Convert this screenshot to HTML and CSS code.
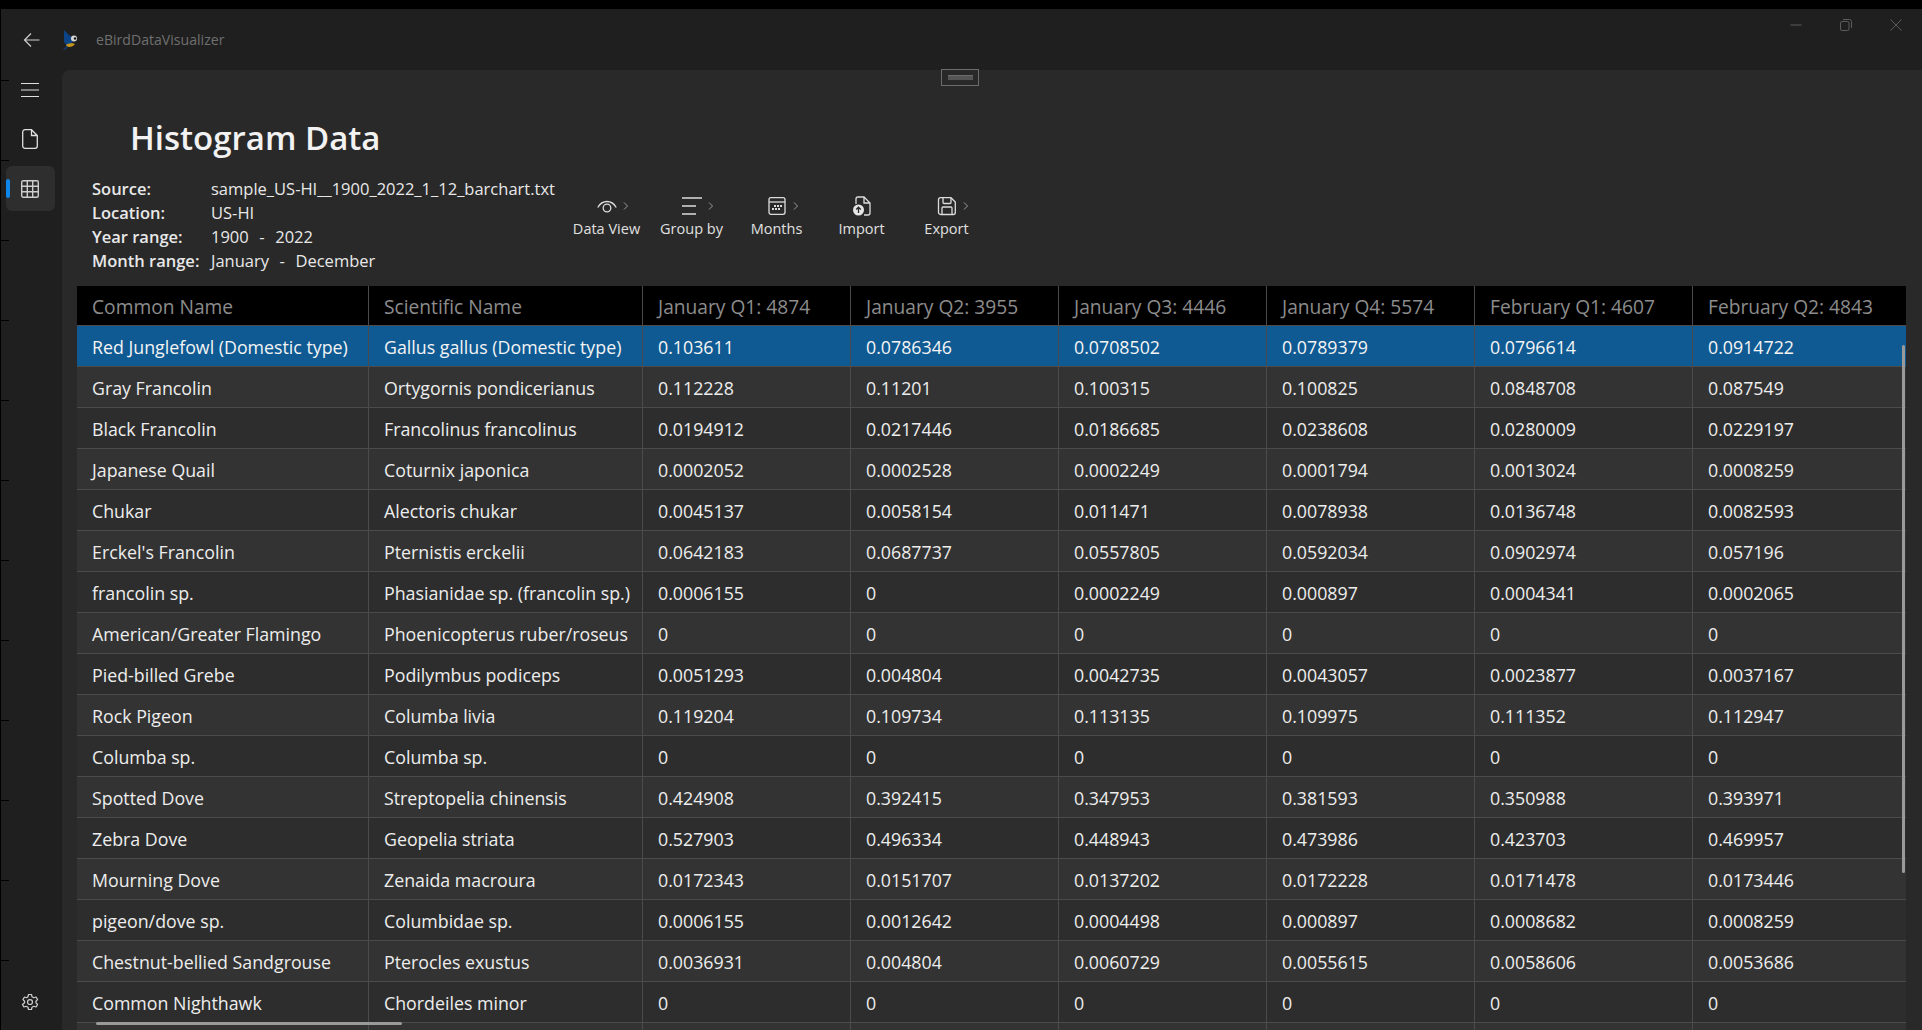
FILE: index.html
```html
<!DOCTYPE html>
<html>
<head>
<meta charset="utf-8">
<title>eBirdDataVisualizer</title>
<link rel="stylesheet" href="styles.css">
</head>
<body>
<div class="topstrip"></div>
<div class="titlebar">
  <svg class="back" width="18" height="16" viewBox="0 0 18 16"><path d="M16.5 8H1.5M8 1.5L1.5 8L8 14.5" fill="none" stroke="#cfcfcf" stroke-width="1.2"/></svg>
  <svg class="logo" width="20" height="20" viewBox="0 0 20 20"><path d="M3 0l5 5 4 3-1 7-5 1-3-4z" fill="#0c4488"/><path d="M5 16c3 2 7 1 9-2l-3-1-5 1z" fill="#c4941c"/><circle cx="13" cy="8.500" r="3" fill="#d8d8d8"/><circle cx="14" cy="8.500" r="1.200" fill="#111"/><path d="M16 8l3 1.500-3 1z" fill="#222"/><path d="M2 19l4-3 1 1-3 3z" fill="#123a70"/></svg>
  <span class="apptitle">eBirdDataVisualizer</span>
  <div class="winbtns">
    <svg width="12" height="12" viewBox="0 0 12 12"><path d="M0.500 6H11.500" stroke="#5c5c5c"/></svg>
    <svg width="12" height="12" viewBox="0 0 12 12"><rect x="0.500" y="2.500" width="8.500" height="9" rx="1.500" fill="none" stroke="#5c5c5c"/><path d="M3 0.500h6.500a2 2 0 0 1 2 2V9" fill="none" stroke="#5c5c5c"/></svg>
    <svg width="12" height="12" viewBox="0 0 12 12"><path d="M0.500 0.500L11.500 11.500M11.500 0.500L0.500 11.500" stroke="#5c5c5c"/></svg>
  </div>
</div>
<div class="shell">
  <nav class="sidebar">
    <div class="nav-item nav-menu"><svg width="18" height="14" viewBox="0 0 18 14"><path d="M0 0.500H18M0 7H18M0 13.500H18" stroke="#e0e0e0" stroke-width="1.200"/></svg></div>
    <div class="nav-item"><svg width="16" height="20" viewBox="0 0 16 20"><path d="M3 0.700H9.500L15.300 6.500V17a2.300 2.300 0 0 1-2.300 2.300H3A2.300 2.300 0 0 1 0.700 17V3A2.300 2.300 0 0 1 3 0.700zM9.500 0.700V6.500H15.300" fill="none" stroke="#e0e0e0" stroke-width="1.300"/></svg></div>
    <div class="nav-item selected"><span class="indicator"></span><svg width="18" height="18" viewBox="0 0 18 18"><rect x="0.700" y="0.700" width="16.600" height="16.600" rx="1.500" fill="none" stroke="#cfcfcf" stroke-width="1.400"/><path d="M6.300 1V17M11.700 1V17M1 6.300H17M1 11.700H17" stroke="#cfcfcf" stroke-width="1.400"/></svg></div>
    <div class="nav-item nav-gear"><svg width="18" height="18" viewBox="0 0 24 24"><circle cx="12" cy="12" r="3.300" fill="none" stroke="#cfcfcf" stroke-width="1.600"/><path d="M10 2h4l.7 3 2.400 1.300 3-.9 2 3.400-2.200 2.200v2l2.200 2.200-2 3.400-3-.9-2.400 1.300-.7 3h-4l-.7-3-2.400-1.300-3 .9-2-3.400L4.800 13v-2L2.600 8.800l2-3.400 3 .9L9.300 5z" fill="none" stroke="#cfcfcf" stroke-width="1.600" stroke-linejoin="round"/></svg></div>
  </nav>
  <main class="content">
    <div class="grip"><span></span></div>
    <h1 class="page-title">Histogram Data</h1>
    <div class="summary">
      <dl class="info">
        <dt>Source:</dt><dd>sample_US-HI__1900_2022_1_12_barchart.txt</dd>
        <dt>Location:</dt><dd>US-HI</dd>
        <dt>Year range:</dt><dd>1900 &nbsp;-&nbsp; 2022</dd>
        <dt>Month range:</dt><dd>January &nbsp;-&nbsp; December</dd>
      </dl>
      <div class="toolbar">
        <div class="tool">
          <div class="tool-icon"><svg width="20" height="20" viewBox="0 0 20 20"><path d="M0.800 11.500C3 7.500 6.300 5.500 10 5.500s7 2 9.200 6" fill="none" stroke="#dcdcdc" stroke-width="1.300"/><circle cx="10" cy="12" r="3.800" fill="none" stroke="#dcdcdc" stroke-width="1.300"/></svg><svg class="chev" width="6" height="8" viewBox="0 0 6 8"><path d="M1 0.500L4.500 4L1 7.500" fill="none" stroke="#9a9a9a"/></svg></div>
          <span>Data View</span>
        </div>
        <div class="tool">
          <div class="tool-icon"><svg width="20" height="20" viewBox="0 0 20 20"><path d="M0 2H20M0 10H14M0 18H14" stroke="#dcdcdc" stroke-width="1.300"/></svg><svg class="chev" width="6" height="8" viewBox="0 0 6 8"><path d="M1 0.500L4.500 4L1 7.500" fill="none" stroke="#9a9a9a"/></svg></div>
          <span>Group by</span>
        </div>
        <div class="tool">
          <div class="tool-icon"><svg width="20" height="20" viewBox="0 0 20 20"><rect x="2" y="1.700" width="16" height="16.600" rx="2" fill="none" stroke="#dcdcdc" stroke-width="1.300"/><path d="M2 6H18" stroke="#dcdcdc" stroke-width="1.300"/><path d="M7 9h2v2H7zM10 9h2v2h-2zM13 9h2v2h-2zM5 12h2v2H5zM8 12h2v2H8zM11 12h2v2h-2z" fill="#dcdcdc"/></svg><svg class="chev" width="6" height="8" viewBox="0 0 6 8"><path d="M1 0.500L4.500 4L1 7.500" fill="none" stroke="#9a9a9a"/></svg></div>
          <span>Months</span>
        </div>
        <div class="tool">
          <div class="tool-icon"><svg width="20" height="20" viewBox="0 0 20 20"><path d="M4 8V3a2 2 0 0 1 2-2h6l6 6v10a2 2 0 0 1-2 2h-4M12 1v6h6" fill="none" stroke="#dcdcdc" stroke-width="1.300"/><circle cx="6.500" cy="14" r="5.500" fill="#e6e6e6"/><path d="M6.500 17V11.500M4.200 13.500l2.300-2.300 2.300 2.300" fill="none" stroke="#292929" stroke-width="1.300"/></svg></div>
          <span>Import</span>
        </div>
        <div class="tool">
          <div class="tool-icon"><svg width="20" height="20" viewBox="0 0 20 20"><path d="M3.500 1.700H14L18.300 6V16.500a2 2 0 0 1-2 2H3.500a2 2 0 0 1-2-2V3.700a2 2 0 0 1 2-2z" fill="none" stroke="#dcdcdc" stroke-width="1.300"/><path d="M6 2v4.500a1 1 0 0 0 1 1h6a1 1 0 0 0 1-1V2M5 18.500V12a1 1 0 0 1 1-1h8a1 1 0 0 1 1 1v6.500" fill="none" stroke="#dcdcdc" stroke-width="1.300"/></svg><svg class="chev" width="6" height="8" viewBox="0 0 6 8"><path d="M1 0.500L4.500 4L1 7.500" fill="none" stroke="#9a9a9a"/></svg></div>
          <span>Export</span>
        </div>
      </div>
    </div>
    <div class="grid-wrap">
      <table class="grid">
        <colgroup><col class="c1"><col class="c2"><col class="c3"><col class="c4"><col class="c5"><col class="c6"><col class="c7"><col class="c8"></colgroup>
        <thead>
          <tr><th>Common Name</th><th>Scientific Name</th><th>January Q1: 4874</th><th>January Q2: 3955</th><th>January Q3: 4446</th><th>January Q4: 5574</th><th>February Q1: 4607</th><th>February Q2: 4843</th></tr>
        </thead>
        <tbody>
          <tr class="active"><td>Red Junglefowl (Domestic type)</td><td>Gallus gallus (Domestic type)</td><td>0.103611</td><td>0.0786346</td><td>0.0708502</td><td>0.0789379</td><td>0.0796614</td><td>0.0914722</td></tr>
          <tr><td>Gray Francolin</td><td>Ortygornis pondicerianus</td><td>0.112228</td><td>0.11201</td><td>0.100315</td><td>0.100825</td><td>0.0848708</td><td>0.087549</td></tr>
          <tr><td>Black Francolin</td><td>Francolinus francolinus</td><td>0.0194912</td><td>0.0217446</td><td>0.0186685</td><td>0.0238608</td><td>0.0280009</td><td>0.0229197</td></tr>
          <tr><td>Japanese Quail</td><td>Coturnix japonica</td><td>0.0002052</td><td>0.0002528</td><td>0.0002249</td><td>0.0001794</td><td>0.0013024</td><td>0.0008259</td></tr>
          <tr><td>Chukar</td><td>Alectoris chukar</td><td>0.0045137</td><td>0.0058154</td><td>0.011471</td><td>0.0078938</td><td>0.0136748</td><td>0.0082593</td></tr>
          <tr><td>Erckel's Francolin</td><td>Pternistis erckelii</td><td>0.0642183</td><td>0.0687737</td><td>0.0557805</td><td>0.0592034</td><td>0.0902974</td><td>0.057196</td></tr>
          <tr><td>francolin sp.</td><td>Phasianidae sp. (francolin sp.)</td><td>0.0006155</td><td>0</td><td>0.0002249</td><td>0.000897</td><td>0.0004341</td><td>0.0002065</td></tr>
          <tr><td>American/Greater Flamingo</td><td>Phoenicopterus ruber/roseus</td><td>0</td><td>0</td><td>0</td><td>0</td><td>0</td><td>0</td></tr>
          <tr><td>Pied-billed Grebe</td><td>Podilymbus podiceps</td><td>0.0051293</td><td>0.004804</td><td>0.0042735</td><td>0.0043057</td><td>0.0023877</td><td>0.0037167</td></tr>
          <tr><td>Rock Pigeon</td><td>Columba livia</td><td>0.119204</td><td>0.109734</td><td>0.113135</td><td>0.109975</td><td>0.111352</td><td>0.112947</td></tr>
          <tr><td>Columba sp.</td><td>Columba sp.</td><td>0</td><td>0</td><td>0</td><td>0</td><td>0</td><td>0</td></tr>
          <tr><td>Spotted Dove</td><td>Streptopelia chinensis</td><td>0.424908</td><td>0.392415</td><td>0.347953</td><td>0.381593</td><td>0.350988</td><td>0.393971</td></tr>
          <tr><td>Zebra Dove</td><td>Geopelia striata</td><td>0.527903</td><td>0.496334</td><td>0.448943</td><td>0.473986</td><td>0.423703</td><td>0.469957</td></tr>
          <tr><td>Mourning Dove</td><td>Zenaida macroura</td><td>0.0172343</td><td>0.0151707</td><td>0.0137202</td><td>0.0172228</td><td>0.0171478</td><td>0.0173446</td></tr>
          <tr><td>pigeon/dove sp.</td><td>Columbidae sp.</td><td>0.0006155</td><td>0.0012642</td><td>0.0004498</td><td>0.000897</td><td>0.0008682</td><td>0.0008259</td></tr>
          <tr><td>Chestnut-bellied Sandgrouse</td><td>Pterocles exustus</td><td>0.0036931</td><td>0.004804</td><td>0.0060729</td><td>0.0055615</td><td>0.0058606</td><td>0.0053686</td></tr>
          <tr><td>Common Nighthawk</td><td>Chordeiles minor</td><td>0</td><td>0</td><td>0</td><td>0</td><td>0</td><td>0</td></tr>
          <tr><td></td><td></td><td></td><td></td><td></td><td></td><td></td><td></td></tr>
        </tbody>
      </table>
      <div class="scroll-v"></div>
      <div class="scroll-h"></div>
    </div>
  </main>
</div>
</body>
</html>
```

FILE: styles.css
```css
html, body {margin: 0; padding: 0; height: 100%;}
body {display: flex; flex-direction: column; height: 100vh; overflow: hidden; background-color: #1f1f1f; font-family: "Open Sans", "Liberation Sans", sans-serif; color: #e8e8e8;}

.topstrip {height: 9px; flex: none; background-color: #000;}

.titlebar {height: 61px; flex: none; display: flex; align-items: center; padding-left: 22px; border-left: 1px solid #000; box-sizing: border-box;}
.back {margin-right: 20px;}
.logo {margin-right: 15px;}
.apptitle {font-size: 14.100px; color: #6f6f6f;}
.winbtns {margin-left: auto; display: flex; gap: 38px; padding-right: 20px; margin-top: -30px;}

.shell {flex: 1; min-height: 0; display: flex;}

.sidebar {width: 62px; flex: none; box-sizing: border-box; display: flex; flex-direction: column; gap: 5px; padding: 0 7px 6px 5px; border-left: 1px solid #000; background: linear-gradient(#000 1px, transparent 1px) 0 10px / 8px 80px repeat-y;}
.nav-item {height: 45px; flex: none; border-radius: 6px; display: flex; align-items: center; justify-content: center; position: relative;}
.nav-item svg {margin-right: 2px;}
.nav-menu {height: 40px; margin-bottom: 1px;}
.nav-gear {margin-top: auto;}
.selected {background-color: #2e2e2e;}
.indicator {position: absolute; left: 0; top: 13px; width: 4px; height: 19px; border-radius: 2px; background-color: #0f86ea;}

.content {flex: 1; min-width: 0; display: flex; flex-direction: column; background-color: #292929; border-top-left-radius: 8px; position: relative; padding: 0 16px 0 15px;}
.grip {position: absolute; left: 879px; top: -1px; width: 36px; height: 15px; border: 1px solid #6c6c6c; display: flex; align-items: center; justify-content: center;}
.grip span {width: 25px; height: 4px; background-color: #555; border-top: 1px solid #6c6c6c;}

.page-title {margin: 46px 0 0 53px; height: 44px; font-size: 33px; line-height: 44px; font-weight: 600; color: #f2f2f2;}

.summary {display: flex; margin-top: 17px; height: 109px; padding-left: 15px;}
.info {margin: 0; display: grid; grid-template-columns: 119px 1fr; grid-auto-rows: 24px; font-size: 16.500px; line-height: 24px; width: 472px; flex: none;}
.info dt {font-weight: 600;}
.info dd {margin: 0; word-spacing: 1px;}

.toolbar {display: flex; padding-top: 17px;}
.tool {width: 85px; display: flex; flex-direction: column; align-items: center; font-size: 14.500px; color: #e0e0e0;}
.tool-icon {height: 24px; display: flex; align-items: center; gap: 7px; margin-bottom: 1px;}
.chev {margin-right: -13px; margin-left: -1px;}

.grid-wrap {flex: 1; min-height: 0; overflow: hidden; position: relative;}
.grid {border-collapse: separate; border-spacing: 0; table-layout: fixed; width: 1829px;}
.c1 {width: 292px;}
.c2 {width: 274px;}
.c3, .c4, .c5, .c6 {width: 208px;}
.c7 {width: 218px;}
.c8 {width: 213px;}
.grid th, .grid td {padding: 1px 0 0 15px; text-align: left; white-space: nowrap; overflow: hidden; box-sizing: content-box; border-bottom: 1px solid #4b4b4b; border-right: 1px solid #4b4b4b; font-size: 17.800px; font-weight: 400;}
.grid th:last-child, .grid td:last-child {border-right: 0;}
.grid th {height: 38px; background-color: #000; color: #8c8c8c; font-size: 19.200px;}
.grid td {height: 39px; background-color: #2d2d2d; color: #ededed;}
.grid tbody tr:nth-child(even) td {background-color: #333;}
.grid tbody tr.active td {background-color: #0f5a93; color: #f4f4f4;}

.scroll-v {position: absolute; right: 1px; top: 59px; width: 3px; height: 528px; background-color: #9a9a9a; border-radius: 2px;}
.scroll-h {position: absolute; left: 19px; bottom: 5px; height: 3px; width: 306px; background-color: #9a9a9a; border-radius: 2px;}
```
